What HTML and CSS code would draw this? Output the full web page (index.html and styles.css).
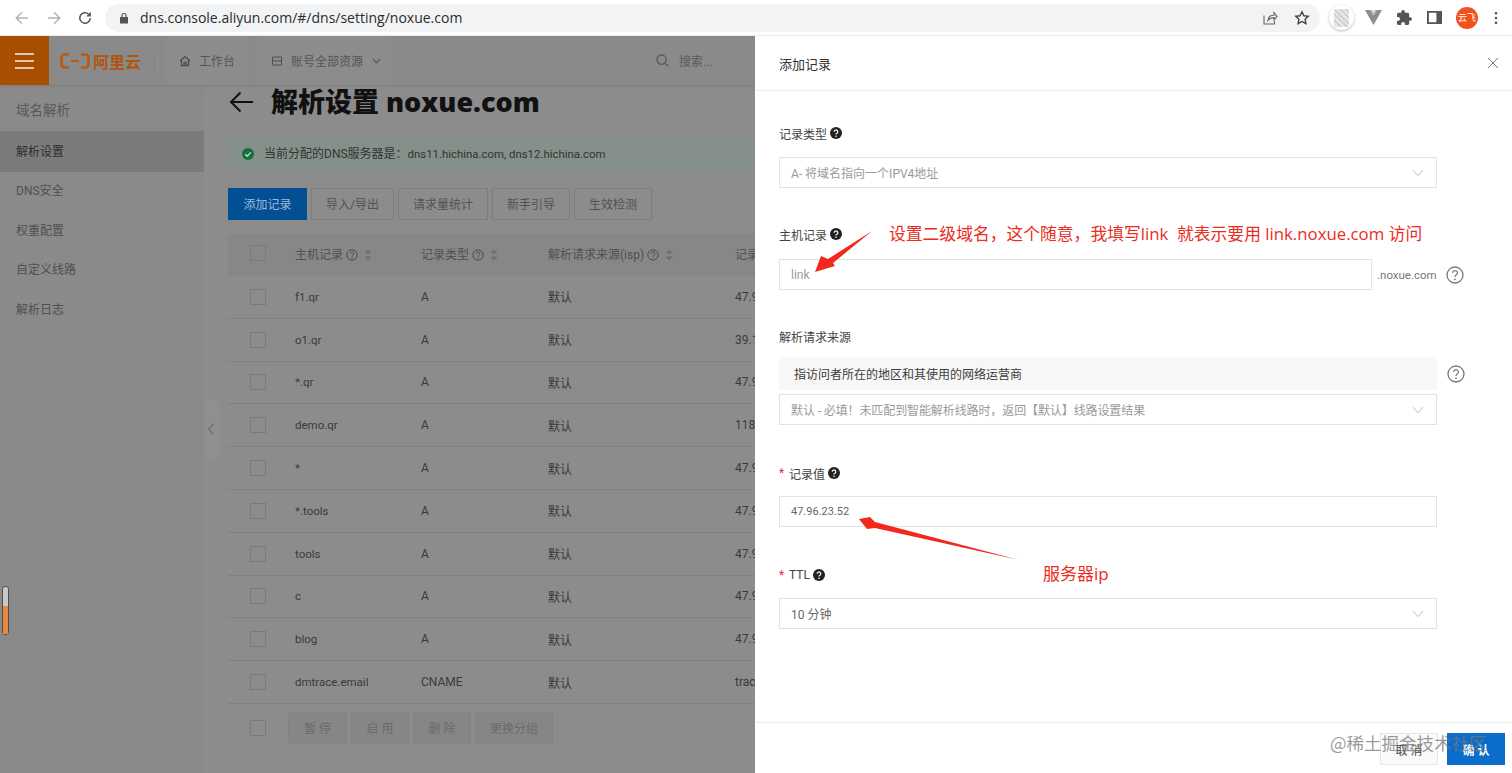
FILE: index.html
```html
<!DOCTYPE html>
<html lang="zh-CN">
<head>
<meta charset="utf-8">
<title>解析设置 noxue.com</title>
<link rel="stylesheet" href="styles.css">
</head>
<body>
<svg class="sprite" width="0" height="0" aria-hidden="true">
  <symbol id="sort" viewBox="0 0 8 12"><path d="M4 0.5 7.5 4.5H.5zM4 11.5.5 7.5h7z"/></symbol>
  <symbol id="hint" viewBox="0 0 12 12"><circle cx="6" cy="6" r="5.2" fill="none" stroke="currentColor"/><path d="M4.3 4.8a1.8 1.8 0 1 1 2.6 1.6c-.6.3-.9.6-.9 1.2" fill="none" stroke="currentColor"/><circle cx="6" cy="9.1" r=".7" fill="currentColor"/></symbol>
  <symbol id="tip" viewBox="0 0 12 12"><circle cx="6" cy="6" r="6" fill="#222"/><path d="M4.2 4.7a1.8 1.8 0 1 1 2.7 1.6c-.6.3-.9.6-.9 1.2" fill="none" stroke="#fff" stroke-width="1.2"/><circle cx="6" cy="9.2" r=".8" fill="#fff"/></symbol>
  <symbol id="big-help" viewBox="0 0 18 18"><circle cx="9" cy="9" r="8" fill="none" stroke="#777" stroke-width="1.3"/><path d="M6.6 7a2.4 2.4 0 1 1 3.6 2.1c-.8.5-1.2.9-1.2 1.9" fill="none" stroke="#777" stroke-width="1.2"/><circle cx="9" cy="13.3" r=".9" fill="#777"/></symbol>
  <symbol id="chev" viewBox="0 0 12 8"><path d="M1 1.2 6 6.6l5-5.4" fill="none" stroke="#bbb"/></symbol>
</svg>

<header class="browser">
  <div class="browser-nav">
    <svg class="b-ic" viewBox="0 0 16 16"><path d="M14 8H2.5M8 2.2 2.2 8 8 13.8" fill="none" stroke="#b3b3b3" stroke-width="1.4"/></svg>
    <svg class="b-ic" viewBox="0 0 16 16"><path d="M2 8h11.5M8 2.2 13.8 8 8 13.8" fill="none" stroke="#b3b3b3" stroke-width="1.4"/></svg>
    <svg class="b-ic" viewBox="0 0 16 16"><path d="M13.2 8A5.2 5.2 0 1 1 11.6 4.2" fill="none" stroke="#555" stroke-width="1.5"/><path d="M13.8 1.8v4.6H9.2z" fill="#555"/></svg>
  </div>
  <div class="omnibox">
    <svg class="lock" viewBox="0 0 10 12"><path d="M2.4 5V3.5a2.6 2.6 0 0 1 5.2 0V5H9v6.5H1V5zM3.6 5h2.8V3.5a1.4 1.4 0 0 0-2.8 0z" fill="#555"/></svg>
    <span class="url">dns.console.aliyun.com/#/dns/setting/noxue.com</span>
    <svg class="o-ic share" viewBox="0 0 16 16"><path d="M2 5.5v8.5h10.5v-3M6 10.5c.3-3.5 3-5.3 6-5.3V2.6l3 3.8-3 3.6V7.600c-2.500 0-4.500.8-6 2.900z" fill="none" stroke="#666" stroke-width="1.100"/></svg>
    <svg class="o-ic" viewBox="0 0 16 16"><path d="m8 1.800 1.900 4 4.400.5-3.200 3 .8 4.400L8 11.500l-3.900 2.200.8-4.400-3.200-3 4.400-.5z" fill="none" stroke="#444" stroke-width="1.400"/></svg>
  </div>
  <div class="browser-ext">
    <span class="ext-round"><span class="ext-qr"></span></span>
    <svg class="e-vue" viewBox="0 0 16 14"><path d="M0 0h5l3 5 3-5h5L8 14z" fill="#8d8d8d"/><path d="M5 0h2l1 2 1-2h2L8 5z" fill="#bcbcbc"/></svg>
    <svg class="e-ic" viewBox="2 1 21 21"><path d="M20.500 11H19V7c0-1.100-.9-2-2-2h-4V3.500a2.500 2.500 0 0 0-5 0V5H4c-1.100 0-1.990.9-1.990 2v3.800H3.500c1.490 0 2.700 1.210 2.700 2.700s-1.210 2.700-2.700 2.700H2V20c0 1.100.9 2 2 2h3.800v-1.500c0-1.490 1.210-2.700 2.700-2.700 1.490 0 2.700 1.210 2.700 2.700V22H17c1.100 0 2-.9 2-2v-4h1.500a2.500 2.500 0 0 0 0-5z" fill="#555"/></svg>
    <svg class="e-ic" viewBox="0 0 16 14"><path d="M1 1h14v12H1z" fill="none" stroke="#555" stroke-width="2"/><path d="M10 1h5v12h-5z" fill="#555"/></svg>
    <span class="avatar">云飞</span>
    <svg class="e-dots" viewBox="0 0 4 16"><circle cx="2" cy="2.500" r="1.500" fill="#555"/><circle cx="2" cy="8" r="1.500" fill="#555"/><circle cx="2" cy="13.500" r="1.500" fill="#555"/></svg>
  </div>
</header>

<div class="viewport">
  <section class="console">
    <nav class="topnav">
      <button class="burger"><span></span><span></span><span></span></button>
      <div class="logo"><svg class="logo-mark" viewBox="0 0 30 16"><path d="M9 1.500H3.500L1.500 3.500v9l2 2H9M21 1.500h5.500l2 2v9l-2 2H21" fill="none" stroke="#b85a10" stroke-width="2.600"/><path d="M11 8h8" stroke="#b85a10" stroke-width="2"/></svg><span class="logo-text">阿里云</span></div>
      <span class="nav-sep"></span>
      <span class="nav-pill home"><svg class="nav-ic" viewBox="0 0 12 12"><path d="M1 6 6 1.500 11 6M2.500 5v5.500h7V5M5 10.500V7.500h2v3" fill="none" stroke="#4e4e4e" stroke-width="1.300"/></svg>工作台</span>
      <span class="nav-pill res"><svg class="nav-ic" viewBox="0 0 12 12"><path d="M1.500 2h9M1.500 6h9M1.500 10h9M1.500 2v8M10.500 2v8" fill="none" stroke="#4e4e4e"/></svg>账号全部资源<svg class="nav-chev" viewBox="0 0 10 6"><path d="M1 1l4 4 4-4" fill="none" stroke="#4e4e4e" stroke-width="1.200"/></svg></span>
      <span class="nav-search"><svg class="search-ic" viewBox="0 0 14 14"><circle cx="6" cy="6" r="5" fill="none" stroke="#4e4e4e" stroke-width="1.200"/><path d="m10 10 3 3" stroke="#4e4e4e" stroke-width="1.200"/></svg>搜索...</span>
    </nav>
    <div class="console-body">
      <aside class="sidebar">
        <div class="side-title">域名解析</div>
        <ul class="side-list">
          <li class="side-item active">解析设置</li>
          <li class="side-item">DNS安全</li>
          <li class="side-item">权重配置</li>
          <li class="side-item">自定义线路</li>
          <li class="side-item">解析日志</li>
        </ul>
      </aside>
      <main class="content">
        <div class="title-row">
          <svg class="back" viewBox="0 0 24 22"><path d="M24 11H2M11.500 1.500 2 11l9.500 9.500" fill="none" stroke="#111" stroke-width="2"/></svg>
          <h1 class="page-title">解析设置 noxue.com</h1>
        </div>
        <div class="alert">
          <svg class="ok" viewBox="0 0 12 12"><circle cx="6" cy="6" r="6" fill="#13703f"/><path d="m3.200 6.200 2 2 3.600-3.800" fill="none" stroke="#c8d8cf" stroke-width="1.300"/></svg>
          <span>当前分配的DNS服务器是：<span class="latin">dns11.hichina.com, dns12.hichina.com</span></span>
        </div>
        <div class="toolbar">
          <span class="btn primary">添加记录</span>
          <span class="btn w1">导入/导出</span>
          <span class="btn w2">请求量统计</span>
          <span class="btn w3">新手引导</span>
          <span class="btn w3">生效检测</span>
        </div>
        <div class="table">
          <div class="row head">
            <span class="check"></span>
            <span>主机记录 <svg class="hint"><use href="#hint"/></svg> <svg class="sort"><use href="#sort"/></svg></span>
            <span>记录类型 <svg class="hint"><use href="#hint"/></svg> <svg class="sort"><use href="#sort"/></svg></span>
            <span>解析请求来源(isp) <svg class="hint"><use href="#hint"/></svg> <svg class="sort"><use href="#sort"/></svg></span>
            <span>记录</span>
          </div>
          <div class="row"><span class="check"></span><span class="host">f1.qr</span><span>A</span><span>默认</span><span>47.9</span></div>
          <div class="row"><span class="check"></span><span class="host">o1.qr</span><span>A</span><span>默认</span><span>39.1</span></div>
          <div class="row"><span class="check"></span><span class="host">*.qr</span><span>A</span><span>默认</span><span>47.9</span></div>
          <div class="row"><span class="check"></span><span class="host">demo.qr</span><span>A</span><span>默认</span><span>118</span></div>
          <div class="row"><span class="check"></span><span class="host">*</span><span>A</span><span>默认</span><span>47.9</span></div>
          <div class="row"><span class="check"></span><span class="host">*.tools</span><span>A</span><span>默认</span><span>47.9</span></div>
          <div class="row"><span class="check"></span><span class="host">tools</span><span>A</span><span>默认</span><span>47.9</span></div>
          <div class="row"><span class="check"></span><span class="host">c</span><span>A</span><span>默认</span><span>47.9</span></div>
          <div class="row"><span class="check"></span><span class="host">blog</span><span>A</span><span>默认</span><span>47.9</span></div>
          <div class="row"><span class="check"></span><span class="host">dmtrace.email</span><span>CNAME</span><span>默认</span><span>trac</span></div>
        </div>
        <div class="bulk">
          <span class="check"></span>
          <span class="bulk-btn b1">暂 停</span>
          <span class="bulk-btn b2">启 用</span>
          <span class="bulk-btn b2">删 除</span>
          <span class="bulk-btn b3">更换分组</span>
        </div>
      </main>
    </div>
    <div class="collapse"><svg viewBox="0 0 8 12"><path d="M6.500 1 1.500 6l5 5" fill="none" stroke="#6e6e6e" stroke-width="1.200"/></svg></div>
  </section>

  <aside class="drawer">
    <div class="drawer-head">
      <span class="drawer-title">添加记录</span>
      <svg class="close" viewBox="0 0 12 12"><path d="m1 1 10 10M11 1 1 11" stroke="#777" stroke-width="1"/></svg>
    </div>
    <form class="form">
      <label class="label l-type">记录类型 <svg class="tip"><use href="#tip"/></svg></label>
      <div class="control select"><span class="muted">A- 将域名指向一个IPV4地址</span><svg class="chev"><use href="#chev"/></svg></div>

      <label class="label l-host">主机记录 <svg class="tip"><use href="#tip"/></svg></label>
      <div class="host-row">
        <div class="control grow"><span class="muted">link</span></div>
        <span class="suffix">.noxue.com</span>
        <svg class="big-help"><use href="#big-help"/></svg>
      </div>

      <label class="label l-src">解析请求来源</label>
      <div class="src-wrap">
        <div class="src-box">
          <div class="tip-box">指访问者所在的地区和其使用的网络运营商</div>
          <div class="control select"><span class="muted tight">默认 - 必填！未匹配到智能解析线路时，返回【默认】线路设置结果</span><svg class="chev"><use href="#chev"/></svg></div>
        </div>
        <svg class="big-help side"><use href="#big-help"/></svg>
      </div>

      <label class="label l-val"><span class="req">*</span>记录值 <svg class="tip"><use href="#tip"/></svg></label>
      <div class="control near"><span class="value ip">47.96.23.52</span></div>

      <label class="label l-ttl"><span class="req">*</span>TTL <svg class="tip"><use href="#tip"/></svg></label>
      <div class="control select near"><span class="value">10 分钟</span><svg class="chev"><use href="#chev"/></svg></div>
    </form>
    <div class="drawer-foot">
      <span class="foot-btn">取 消</span>
      <span class="foot-btn ok-btn">确 认</span>
    </div>
  </aside>

  <svg class="arrows" viewBox="0 0 1512 737">
    <path class="arrow" d="M815 236 821 220 828 223 872 195 833 227 835 230z"/>
    <path class="arrow" d="M859 483 870 481 875 486 1019 524 875 492 867 493z"/>
  </svg>
  <span class="note note-host">设置二级域名，这个随意，我填写link  就表示要用 link.noxue.com 访问</span>
  <span class="note note-ip">服务器ip</span>
  <div class="scroll-widget"><span></span></div>
  <span class="watermark">@稀土掘金技术社区</span>
</div>
</body>
</html>
```

FILE: styles.css
```css
* { box-sizing: border-box; }
html, body { margin: 0; height: 100%; overflow: hidden; background: #fff; }
body {
  width: 1512px;
  height: 773px;
  font-family: "Roboto", "Noto Sans CJK SC", sans-serif;
  font-size: 12px;
  display: flex;
  flex-direction: column;
}
.sprite { position: absolute; }

/* browser chrome */
.browser {
  height: 36px;
  flex: none;
  display: flex;
  align-items: center;
  background: #fff;
  border-bottom: 1px solid #ececec;
}
.browser-nav {
  width: 105px;
  padding-left: 14px;
  display: flex;
  gap: 15.500px;
  align-items: center;
  flex: none;
}
.b-ic { width: 16px; height: 16px; }
.omnibox {
  width: 1215px;
  height: 28px;
  flex: none;
  display: flex;
  align-items: center;
  background: #f1f3f4;
  border-radius: 14px;
  padding-left: 14px;
  padding-right: 10px;
  gap: 16px;
}
.lock { width: 10px; height: 12px; flex: none; margin-right: -5px; }
.url {
  flex: 1;
  font-family: "Open Sans", "Noto Sans", sans-serif;
  font-size: 14px;
  color: #2c2c2c;
}
.o-ic { width: 16px; height: 16px; flex: none; }
.browser-ext {
  flex: 1;
  display: flex;
  align-items: center;
  padding-left: 9px;
  gap: 15px;
}
.ext-round {
  width: 25px;
  height: 25px;
  border-radius: 50%;
  background: #fff;
  box-shadow: 0 1px 3px #bbb;
  display: flex;
  align-items: center;
  justify-content: center;
  flex: none;
}
.ext-qr {
  width: 15px;
  height: 18px;
  border-radius: 2px;
  background: repeating-linear-gradient(45deg, #d2d2d2 0 2px, #e8e8e8 2px 4px);
}
.e-vue { width: 17px; height: 15px; flex: none; margin-left: -4px; }
.e-ic { width: 15px; height: 15px; flex: none; }
.avatar {
  width: 22px;
  height: 22px;
  flex: none;
  border-radius: 50%;
  background: #f1511b;
  color: #fff;
  font-size: 9px;
  line-height: 22px;
  text-align: center;
  font-family: "Noto Sans CJK SC", sans-serif;
  white-space: nowrap;
  margin-left: -1px;
  margin-right: -2px;
}
.e-dots { width: 4px; height: 14px; flex: none; margin-left: 3px; }

/* page */
.viewport { flex: 1; display: flex; position: relative; min-height: 0; }
.console {
  width: 755px;
  flex: none;
  background: #8c8c8c;
  color: #3c3c3c;
  position: relative;
  overflow: hidden;
  display: flex;
  flex-direction: column;
  font-family: "Roboto", "Noto Sans CJK SC", sans-serif;
}
.topnav {
  height: 49px;
  flex: none;
  display: flex;
  align-items: center;
  background: #8a8a8a;
  box-shadow: 0 1px 2px #7c7c7c;
  position: relative;
  z-index: 1;
}
.burger {
  width: 49px;
  height: 49px;
  flex: none;
  border: 0;
  padding: 0 15px;
  background: #a84e00;
  display: flex;
  flex-direction: column;
  justify-content: center;
  gap: 5px;
}
.burger span { height: 2px; background: #e3c7ad; display: block; }
.logo { display: flex; align-items: center; gap: 3px; margin-left: 11px; width: 94px; flex: none; }
.logo-mark { width: 30px; height: 16px; flex: none; }
.logo-text {
  font-family: "Noto Sans CJK SC", sans-serif;
  font-weight: 700;
  font-size: 16px;
  color: #b05510;
  white-space: nowrap;
}
.nav-sep { width: 1px; height: 20px; background: #828282; flex: none; }
.nav-pill {
  display: flex;
  align-items: center;
  height: 49px;
  color: #555;
  font-size: 12px;
  white-space: nowrap;
  background: #8c8c8c;
  flex: none;
}
.home { width: 85px; margin-left: 10px; padding-left: 14px; }
.res { width: 132px; margin-left: 8px; padding-left: 13px; }
.nav-ic { width: 12px; height: 12px; margin-right: 8px; flex: none; }
.nav-chev { width: 9px; height: 6px; margin-left: 9px; flex: none; }
.nav-search {
  display: flex;
  align-items: center;
  color: #5a5a5a;
  white-space: nowrap;
  position: absolute;
  left: 656px;
}
.search-ic { width: 13px; height: 13px; margin-right: 10px; }

.console-body { flex: 1; display: flex; min-height: 0; }
.sidebar { width: 204px; flex: none; background: #8a8a8a; color: #4c4c4c; }
.side-title { height: 46px; line-height: 50px; padding-left: 16px; font-size: 13.500px; color: #585858; }
.side-list { list-style: none; margin: 0; padding: 0; }
.side-item { height: 39.500px; line-height: 39.500px; padding-left: 16px; font-size: 12px; color: #505050; }
.side-item.active { height: 41px; line-height: 42px; background: #7b7b7b; color: #2e2e2e; }

.content { flex: 1; padding-left: 24px; min-width: 0; }
.title-row { height: 34px; margin-bottom: 17px; display: flex; align-items: center; gap: 18px; }
.back { width: 24px; height: 22px; flex: none; margin-left: 1px; }
.page-title {
  margin: 0;
  font-family: "Open Sans", "Noto Sans CJK SC", sans-serif;
  font-size: 27px;
  line-height: 34px;
  font-weight: 800;
  color: #111;
  white-space: nowrap;
}
.alert {
  height: 35px;
  background: #85908a;
  display: flex;
  align-items: center;
  padding: 0 0 3px 14px;
  gap: 10px;
  color: #333;
  font-size: 12px;
  white-space: nowrap;
}
.alert .ok { margin-top: 3px; }
.latin { font-size: 11.400px; }
.ok { width: 12px; height: 12px; flex: none; }
.toolbar { display: flex; gap: 4px; margin-top: 17px; height: 33px; }
.btn {
  height: 32px;
  border: 1px solid #7f7f7f;
  background: #8c8c8c;
  display: flex;
  align-items: center;
  justify-content: center;
  padding-bottom: 1px;
  color: #525252;
  font-size: 12px;
  flex: none;
}
.btn.primary { width: 79px; background: #024f93; border-color: #024f93; color: #9fb9d3; }
.btn.w1 { width: 83px; }
.btn.w2 { width: 90px; }
.btn.w3 { width: 78px; }
.table { margin-top: 13px; }
.row {
  display: grid;
  grid-template-columns: 67px 126px 127px 187px 1fr;
  height: 42.800px;
  align-items: center;
  border-bottom: 1px solid #818181;
  white-space: nowrap;
  font-size: 12px;
  color: #3a3a3a;
}
.host { font-size: 11.500px; }
.row.head { height: 42px; padding-bottom: 4px; background: #878787; border-bottom: 0; color: #505050; }
.check {
  width: 16px;
  height: 16px;
  border: 1px solid #7a7a7a;
  margin-left: 22px;
  display: block;
}
.hint { width: 12px; height: 12px; color: #4c4c4c; vertical-align: -2px; }
.sort { width: 8px; height: 12px; fill: #6f6f6f; margin-left: 3px; vertical-align: -2px; }
.bulk { display: flex; align-items: center; margin-top: 8px; height: 32px; }
.bulk-btn {
  height: 32px;
  border: 1px solid #828282;
  background: #868686;
  color: #6a6a6a;
  display: flex;
  align-items: center;
  justify-content: center;
  margin-right: 4px;
  flex: none;
}
.bulk .check { margin-right: 22px; }
.b1 { width: 59px; }
.b2 { width: 58px; }
.b3 { width: 78px; }
.collapse {
  position: absolute;
  left: 204px;
  top: 362px;
  width: 16px;
  height: 62px;
  background: #8f8f8f;
  border-radius: 0 10px 10px 0;
  display: flex;
  align-items: center;
  padding-left: 3px;
}
.collapse svg { width: 8px; height: 12px; }

/* drawer */
.drawer {
  flex: 1;
  background: #fff;
  display: flex;
  flex-direction: column;
  font-family: "Roboto", "Noto Sans CJK SC", sans-serif;
  color: #444;
}
.drawer-head {
  height: 55px;
  flex: none;
  display: flex;
  align-items: center;
  justify-content: space-between;
  padding: 0 13px 0 24px;
  border-bottom: 1px solid #ececec;
}
.drawer-title { font-size: 13px; color: #333; }
.close { width: 12px; height: 12px; }
.form { flex: 1; padding: 34px 0 0 24px; width: 682px; min-height: 0; }
.label {
  display: flex;
  align-items: center;
  height: 16px;
  font-size: 12px;
  color: #444;
  gap: 4px;
  white-space: nowrap;
}
.l-host { margin-top: 38px; }
.l-src { margin-top: 38px; }
.l-val { margin-top: 40px; }
.l-ttl { margin-top: 40px; }
.req { color: #d9363e; font-size: 12px; width: 6px; }
.tip { width: 12px; height: 12px; flex: none; margin-left: -1px; }
.control {
  height: 31px;
  width: 658px;
  margin-top: 16px;
  border: 1px solid #e2e2e2;
  display: flex;
  align-items: center;
  justify-content: space-between;
  padding: 0 12px 0 11px;
  font-size: 12px;
}
.control.near { margin-top: 15px; }
.muted { color: #9a9a9a; }
.tight { letter-spacing: -0.100px; }
.value { color: #666; }
.ip { font-size: 11px; }
.chev { width: 12px; height: 8px; flex: none; }
.host-row { display: flex; align-items: center; width: 695px; margin-top: 17px; }
.host-row .control { margin-top: 0; flex: none; width: 593px; }
.suffix { margin-left: 5px; width: 62px; color: #777; font-size: 11.500px; flex: none; }
.big-help { width: 18px; height: 18px; flex: none; margin-left: 7px; }
.src-wrap { display: flex; align-items: flex-start; margin-top: 13px; width: 695px; }
.src-box { width: 658px; flex: none; }
.tip-box {
  height: 33px;
  background: #f7f7f7;
  display: flex;
  align-items: center;
  padding: 0 0 1px 15px;
  color: #3c3c3c;
}
.src-box .control { margin-top: 4px; }
.big-help.side { margin-left: 10px; margin-top: 8px; }
.drawer-foot {
  height: 51px;
  flex: none;
  border-top: 1px solid #ececec;
  display: flex;
  justify-content: flex-end;
  align-items: flex-start;
  gap: 9px;
  padding: 10px 7px 0 0;
}
.foot-btn {
  width: 58px;
  height: 32px;
  border: 1px solid #e6e6e6;
  background: #fafafa;
  display: flex;
  align-items: center;
  justify-content: center;
  color: #444;
  font-size: 12px;
}
.ok-btn { background: #0a6ccb; border-color: #0a6ccb; color: #fff; font-weight: 700; }

/* overlays */
.arrows { position: absolute; left: 0; top: 0; width: 1512px; height: 737px; pointer-events: none; }
.arrow { fill: #f2281c; }
.note {
  position: absolute;
  color: #ea2d23;
  font-family: "Open Sans", "Noto Sans CJK SC", sans-serif;
  font-size: 16.800px;
  line-height: 22px;
  white-space: pre;
}
.note-host { left: 889px; top: 187px; }
.note-ip { left: 1043px; top: 527px; font-size: 17px; }
.scroll-widget {
  position: absolute;
  left: 2px;
  top: 550px;
  width: 7px;
  height: 49px;
  border: 1px solid #4e4e4e;
  border-radius: 3px;
  background: #c8c8c8;
  display: flex;
  align-items: flex-end;
}
.scroll-widget span { display: block; width: 100%; height: 28px; background: #e9873f; }
.watermark {
  position: absolute;
  left: 1330px;
  top: 694px;
  font-family: "Noto Sans CJK SC", sans-serif;
  font-size: 17.500px;
  line-height: 26px;
  color: rgba(120, 120, 120, 0.75);
  white-space: nowrap;
}
```
